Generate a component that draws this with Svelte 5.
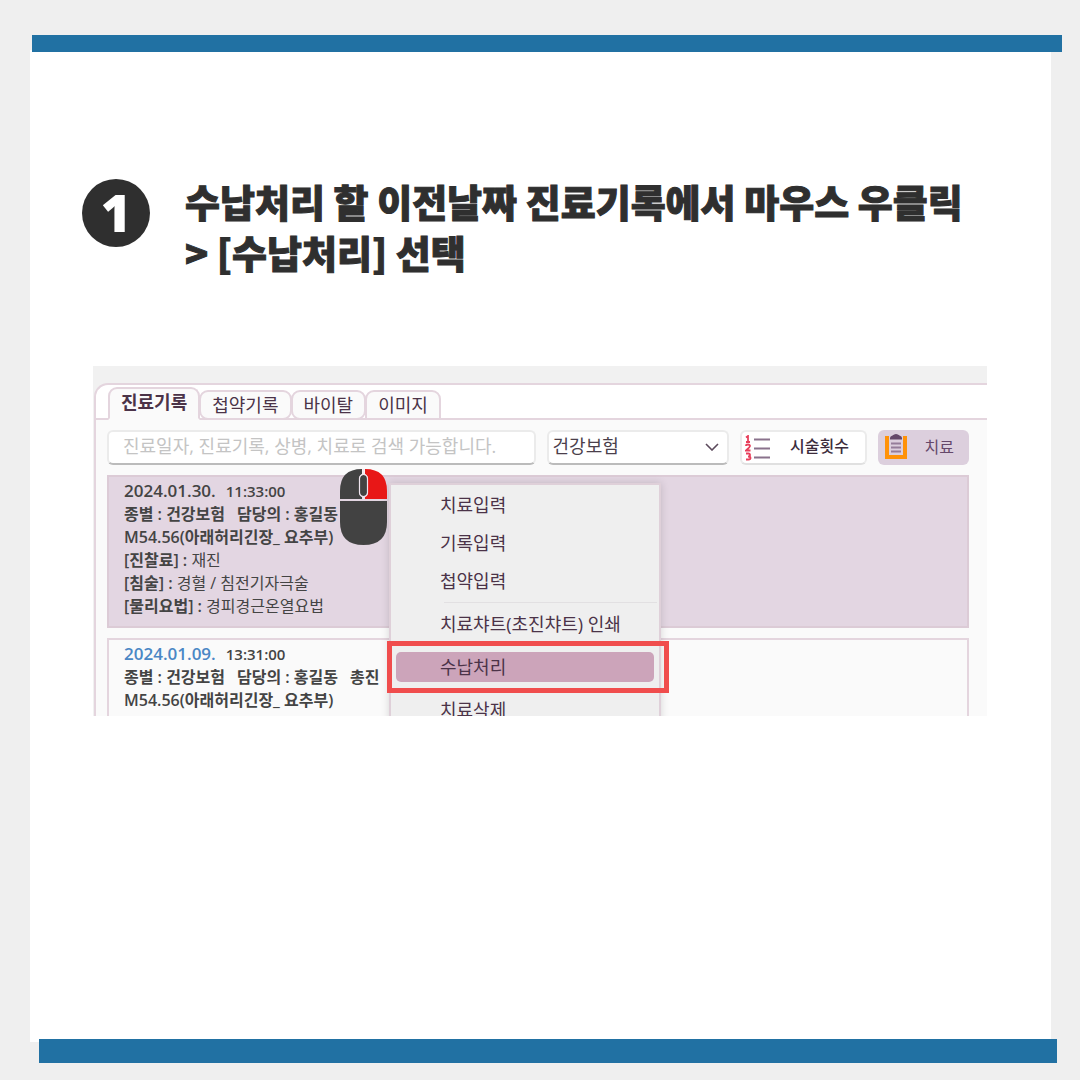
<!-- App.svelte -->
<script>
  const tabs = ['진료기록', '첩약기록', '바이탈', '이미지']

  const records = [
    {
      date: '2024.01.30.',
      time: '11:33:00',
      info: ['종별 : 건강보험', '담당의 : 홍길동', '총진'],
      disease: 'M54.56(아래허리긴장_ 요추부)',
      items: [
        { label: '[진찰료] :', value: '재진' },
        { label: '[침술] :', value: '경혈 / 침전기자극술' },
        { label: '[물리요법] :', value: '경피경근온열요법' },
      ],
    },
    {
      date: '2024.01.09.',
      time: '13:31:00',
      info: ['종별 : 건강보험', '담당의 : 홍길동', '총진'],
      disease: 'M54.56(아래허리긴장_ 요추부)',
      items: [],
    },
  ]

  const menuGroups = [
    ['치료입력', '기록입력', '첩약입력'],
    ['치료챠트(초진챠트) 인쇄'],
    ['수납처리'],
    ['치료삭제'],
  ]

  let activeTab = $state('진료기록')
  let activeRecord = $state(0)
  let activeMenu = $state('수납처리')
  let keyword = $state('')
  let insurance = $state('건강보험')
</script>

<div class="slide">
  <div class="bar top"></div>

  <main>
    <header>
      <span class="step">1</span>
      <h1>수납처리 할 이전날짜 진료기록에서 마우스 우클릭<br />&gt;&nbsp;[수납처리] 선택</h1>
    </header>

    <section class="capture">
      <div class="frame">
        <div class="tabs" role="tablist">
          {#each tabs as tab}
            <button
              role="tab"
              class="tab"
              class:active={tab === activeTab}
              aria-selected={tab === activeTab}
              onclick={() => (activeTab = tab)}>{tab}</button
            >
          {/each}
        </div>

        <div class="content">
          <div class="toolbar">
            <input
              class="field search"
              type="text"
              aria-label="진료기록 검색"
              placeholder="진료일자, 진료기록, 상병, 치료로 검색 가능합니다."
              bind:value={keyword}
            />
            <div class="select">
              <select class="field" aria-label="종별" bind:value={insurance}>
                <option>건강보험</option>
              </select>
              <svg class="chevron" viewBox="0 0 14 8" aria-hidden="true">
                <path d="M1 1l6 6 6-6" fill="none" stroke="#5c4a5c" stroke-width="1.600" />
              </svg>
            </div>
            <button class="field count">
              <svg class="count-icon" viewBox="0 0 26 26" aria-hidden="true">
                <g fill="none" stroke="#e8405c" stroke-width="1.800">
                  <path d="M1 2.500l2-1.500v6M1 7h4" />
                  <path d="M1 11q0-1.500 2-1.500t2 1.500q0 1-4 4.500h4.500" />
                  <path d="M1 18.500h2.500q1.500 0 1.500 1.500t-2 1.500q2.500 0 2.500 1.500t-2 1.500h-2.500" />
                </g>
                <path d="M9 4.500h16M9 13.500h16M9 22.500h16" stroke="#8a728c" stroke-width="2" />
              </svg>
              시술횟수
            </button>
            <button class="treat">
              <svg class="treat-icon" viewBox="0 0 22 26" aria-hidden="true">
                <path d="M0 2h4v19h14V2h4v23H0z" fill="#ff9208" />
                <path d="M5 5.500V4q0-2 2.500-2.500Q9 0 11 0t3.500 1.500Q17 2 17 4v1.500z" fill="#65486a" />
                <path d="M6 9.500h10M6 13.500h10M6 17.500h10" stroke="#957d9a" stroke-width="2" />
              </svg>
              치료
            </button>
          </div>

          {#each records as record, i}
            <article class="record" class:selected={i === activeRecord}>
              <p class="when"><span class="date">{record.date}</span><span>{record.time}</span></p>
              <p class="info">
                {#each record.info as text}<span>{text}</span>{/each}
              </p>
              <p>{record.disease}</p>
              {#each record.items as item}
                <p>{item.label} <span class="value">{item.value}</span></p>
              {/each}
            </article>
          {/each}
        </div>
      </div>

      <ul class="menu">
        {#each menuGroups as group, i}
          {#if i > 0}
            <li class="line" role="separator"></li>
          {/if}
          {#each group as item}
            <li class:marked={item === activeMenu}>
              <button class="menu-item" onclick={() => (activeMenu = item)}>{item}</button>
            </li>
          {/each}
        {/each}
      </ul>

      <svg class="mouse" viewBox="0 0 47 76" aria-hidden="true">
        <path d="M22 0v5q-3 1.500-3 5v13q0 4 3 5v2H0V22Q0 0 22 0z" fill="#424242" />
        <path d="M25 0v5q3 1.500 3 5v13q0 4-3 5v2h22V22Q47 0 25 0z" fill="#e81717" />
        <rect x="20" y="6" width="7" height="21" rx="3.500" fill="#424242" />
        <path d="M23.500 0v5.500M23.500 27.500v3" stroke="#efe4ee" stroke-width="2" />
        <rect x="19.500" y="5.500" width="8" height="22" rx="4" fill="none" stroke="#efe4ee" stroke-width="1.200" />
        <path d="M0 32h47v21q0 23-23.500 23T0 53z" fill="#424242" />
      </svg>
    </section>
  </main>

  <div class="bar bottom"></div>
</div>

<style>
  :global(body) {
    background: #efefef;
  }
  .slide {
    padding: 35px 0 17px;
    font-family: 'Open Sans', 'Noto Sans CJK KR', sans-serif;
    color: #444;
  }
  .bar {
    position: relative;
    background: #2171a3;
  }
  .top {
    height: 17px;
    margin: 0 18px 0 32px;
  }
  .bottom {
    height: 24px;
    margin: -3px 23px 0 39px;
  }
  main {
    margin: -2px 29px 0 30px;
    padding: 125px 64px 326px 52px;
    background: #fff;
  }
  header {
    display: flex;
    gap: 35px;
  }
  .step {
    flex: none;
    width: 68px;
    height: 68px;
    margin-top: 4px;
    border-radius: 50%;
    background: #2f2f2f;
    color: #fff;
    font-size: 52px;
    font-weight: 800;
    line-height: 66px;
    text-align: center;
  }
  h1 {
    margin: 0 -40px 0 0;
    color: #2f2f2f;
    font-family: 'Noto Sans CJK KR', sans-serif;
    font-size: 38px;
    font-weight: 900;
    line-height: 51px;
    -webkit-text-stroke: 1px #2f2f2f;
  }
  .capture {
    position: relative;
    height: 350px;
    margin: 89px 0 0 11px;
    padding: 17px 0 0 1px;
    box-sizing: border-box;
    overflow: hidden;
    background: #f1f1f1;
  }
  .frame {
    border: 2px solid #e4d5de;
    border-width: 2px 0 0 2px;
    border-radius: 14px 0 0 0;
    background: #fff;
    overflow: hidden;
  }
  .tabs {
    display: flex;
    align-items: flex-end;
    height: 35px;
    padding: 0 12px;
    border-bottom: 2px solid #e4d5de;
    box-sizing: border-box;
  }
  .tab {
    height: 30px;
    margin: 0 0 -2px -1px;
    padding: 0 11px;
    border: 2px solid #e4d5de;
    border-radius: 9px;
    background: #fafafa;
    color: #4b3348;
    font: inherit;
    font-size: 18px;
    line-height: 26px;
  }
  .tab:last-child {
    border-radius: 9px 9px 0 0;
  }
  .tab.active {
    height: 33px;
    margin-left: 0;
    padding: 0 11px 3px;
    border-bottom-color: #fafafa;
    border-radius: 9px 9px 0 0;
    font-weight: 600;
  }
  .content {
    padding: 10px 18px 0 11px;
    background: #fafafa;
  }
  .toolbar {
    display: grid;
    grid-template-columns: 428fr 182fr 127fr 91fr;
    gap: 11px;
    height: 35px;
    margin-bottom: 10px;
  }
  .field {
    width: 100%;
    height: 35px;
    border: 2px solid #ebebeb;
    border-bottom-color: #bbb;
    border-radius: 6px;
    background: #fff;
    box-sizing: border-box;
    color: #4b3f4b;
    font: inherit;
    font-size: 18px;
  }
  .search {
    padding: 0 14px 4px;
  }
  .search::placeholder {
    color: #c4c4c4;
    opacity: 1;
  }
  .select {
    position: relative;
  }
  select.field {
    appearance: none;
    padding: 0 4px 4px;
  }
  .chevron {
    position: absolute;
    top: 13px;
    right: 10px;
    width: 14px;
    height: 8px;
    pointer-events: none;
  }
  .count,
  .treat {
    display: flex;
    align-items: center;
    justify-content: space-between;
    line-height: 24px;
    white-space: nowrap;
  }
  .count {
    padding: 0 16px 4px 3px;
    border-bottom-color: #e0e0e0;
    color: #3c2c3c;
    font-size: 16px;
    font-weight: 500;
  }
  .count-icon {
    width: 26px;
    height: 26px;
    margin-top: 4px;
  }
  .treat {
    padding: 0 15px 4px 7px;
    border: 0;
    border-radius: 6px;
    background: #dccfdd;
    color: #65486a;
    font: inherit;
    font-size: 16px;
  }
  .treat-icon {
    width: 22px;
    height: 26px;
    margin-top: 2px;
  }
  .record {
    min-height: 153px;
    margin-bottom: 10px;
    padding: 2px 15px;
    border: 2px solid #e4d5de;
    box-sizing: border-box;
    font-size: 16px;
    font-weight: 600;
  }
  .record.selected {
    border-color: #dccbd6;
    background: #e3d6e2;
  }
  .record p {
    margin: 0;
    line-height: 23px;
    white-space: nowrap;
  }
  .record .when {
    display: flex;
    gap: 10px;
    font-size: 15px;
    line-height: 24px;
  }
  .date {
    color: #4a87c5;
    font-size: 17px;
  }
  .selected .date {
    color: #444;
  }
  .info {
    display: flex;
    gap: 12px;
  }
  .value {
    font-weight: 400;
  }
  .menu {
    position: absolute;
    top: 117px;
    left: 296px;
    width: 272px;
    margin: 0;
    padding: 1px 5px;
    border: 2px solid #dfd0d9;
    box-sizing: border-box;
    background: #efefef;
    box-shadow: 0 0 8px #00000026;
    list-style: none;
  }
  .menu li {
    position: relative;
    padding: 4px 0;
  }
  .menu .line {
    height: 1px;
    margin: 2px -3px 2px 48px;
    padding: 0;
    background: #e2e0e2;
  }
  .menu .marked {
    z-index: 1;
  }
  .menu-item {
    display: block;
    width: 100%;
    height: 30px;
    padding: 0 0 0 44px;
    border: 0;
    border-radius: 5px;
    background: none;
    color: #4b3348;
    font: inherit;
    font-size: 18px;
    line-height: 30px;
    text-align: left;
  }
  .marked .menu-item {
    background: #cca4ba;
  }
  .marked::after {
    content: '';
    position: absolute;
    inset: -7px -15px -7px -9px;
    border: 5px solid #f04d4d;
    pointer-events: none;
  }
  .mouse {
    position: absolute;
    top: 103px;
    left: 247px;
    width: 47px;
    height: 76px;
  }
</style>
